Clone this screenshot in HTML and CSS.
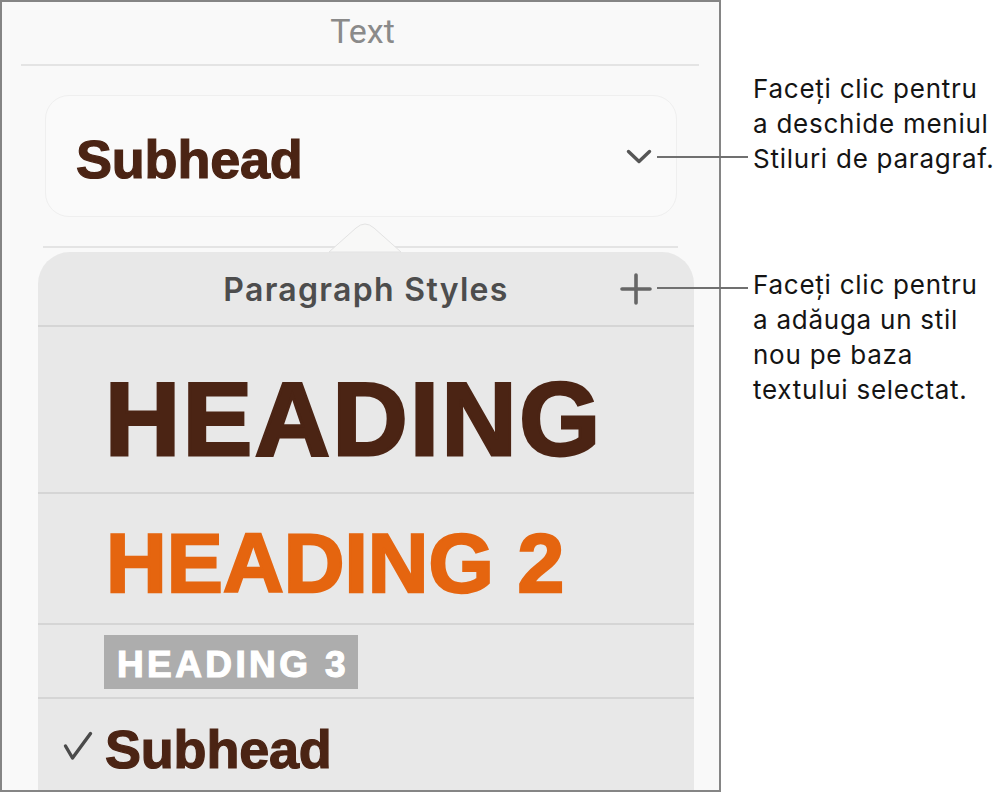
FILE: index.html
```html
<!DOCTYPE html>
<html lang="ro">
<head>
    <meta charset="UTF-8">
    <meta name="viewport" content="width=device-width, initial-scale=1.0">
    <title>Text – Paragraph Styles</title>
    <link rel="stylesheet" href="styles.css">
</head>
<body>
    <div class="page">
        <div class="panel">
            <div class="panel-title">Text</div>
            <div class="rule"></div>

            <div class="style-card">
                <span class="style-name">Subhead</span>
                <svg class="chevron" width="26" height="16" viewBox="0 0 26 16">
                    <path d="M2.5 2.5 L13 12.5 L23.5 2.5" fill="none" stroke="#555" stroke-width="3.4" stroke-linecap="round" stroke-linejoin="round"/>
                </svg>
            </div>

            <div class="rule rule-inner"></div>

            <div class="popover">
                <!-- arrow over the rule -->
                <svg class="popover-arrow" width="80" height="32" viewBox="0 0 80 32">
                    <path d="M4 31 L31 7 Q40 -1 49 7 L76 31 Z" fill="#f8f8f7" stroke="#e3e3e3" stroke-width="1"/>
                </svg>
                <div class="popover-head">
                    <span></span>
                    <span class="popover-title">Paragraph Styles</span>
                    <svg class="plus" width="32" height="32" viewBox="0 0 32 32">
                        <path d="M16 2 V30 M2 16 H30" stroke="#666" stroke-width="3.6" stroke-linecap="round"/>
                    </svg>
                </div>
                <div class="style-row row-h1">
                    <span class="heading-1">HEADING</span>
                </div>
                <div class="style-row row-h2">
                    <span class="heading-2">HEADING 2</span>
                </div>
                <div class="style-row row-h3">
                    <span class="heading-3">HEADING 3</span>
                </div>
                <div class="style-row row-sub">
                    <svg class="check" width="30" height="30" viewBox="0 0 30 30">
                        <path d="M2.5 15 L9.5 27 L27.5 2.5" fill="none" stroke="#4a4a4a" stroke-width="3.4" stroke-linecap="round" stroke-linejoin="round"/>
                    </svg>
                    <span class="style-name">Subhead</span>
                </div>
            </div>
        </div>

        <div class="notes">
            <p class="note note-menu">Faceți clic pentru<br>a deschide meniul<br>Stiluri de paragraf.</p>
            <p class="note note-add">Faceți clic pentru<br>a adăuga un stil<br>nou pe baza<br>textului selectat.</p>
        </div>

        <!-- callout lines -->
        <div class="callout callout-menu"></div>
        <div class="callout callout-add"></div>
    </div>
</body>
</html>
```

FILE: styles.css
```css
body {
    margin: 0;
    background-color: #ffffff;
    font-family: Roboto, "Liberation Sans", sans-serif;
}

.page {
    position: relative;
    display: flex;
    align-items: flex-start;
    width: 1007px;
    height: 793px;
    overflow: hidden;
}

/* panneau gauche */
.panel {
    display: flex;
    flex-direction: column;
    width: 721px;
    height: 792px;
    box-sizing: border-box;
    border: 2px solid #858585;
    background-color: #f9f9f9;
    overflow: hidden;
    flex-shrink: 0;
}

.panel-title {
    height: 62px;
    box-sizing: border-box;
    padding-top: 12px;
    text-align: center;
    font-size: 34px;
    line-height: 34px;
    color: #8a8a8a;
    padding-left: 4px;
}

.rule {
    height: 2px;
    margin: 0 20px 0 19px;
    background-color: #e4e4e4;
}

.rule-inner {
    margin: 29px 41px 0 41px;
}

.style-card {
    display: flex;
    align-items: center;
    justify-content: space-between;
    height: 122px;
    box-sizing: border-box;
    margin: 29px 42px 0 43px;
    padding: 6px 24px 0 30px;
    border: 1px solid #efefef;
    border-radius: 24px;
    background-color: #fafafa;
}

.style-name {
    font-family: "Liberation Sans", Arial, sans-serif;
    font-weight: bold;
    font-size: 54px;
    line-height: 54px;
    letter-spacing: -0.2px;
    color: #4b2414;
    -webkit-text-stroke: 1.2px #4b2414;
}

.chevron {
    margin-top: -4px;
}

/* menu Paragraph Styles */
.popover {
    position: relative;
    flex: 1;
    margin: 4px 25px 0 36px;
    border-radius: 32px 32px 0 0;
    background-color: #e8e8e8;
}

.popover-arrow {
    position: absolute;
    top: -31px;
    left: 287px;
}

.popover-head {
    display: grid;
    grid-template-columns: 1fr auto 1fr;
    align-items: center;
    height: 73px;
    padding: 0 42px;
    border-bottom: 2px solid #d5d5d5;
}

.popover-title {
    font-family: Inter, Roboto, sans-serif;
    font-weight: 600;
    font-size: 32px;
    letter-spacing: 1.3px;
    color: #4d4d4d;
    padding-top: 2px;
}

.plus {
    justify-self: end;
}

.style-row {
    display: flex;
    align-items: flex-start;
    box-sizing: border-box;
    border-bottom: 2px solid #d5d5d5;
    font-family: "Liberation Sans", Arial, sans-serif;
    font-weight: bold;
}

.row-h1 {
    height: 167px;
    padding: 40px 0 0 67px;
}

.heading-1 {
    font-size: 104px;
    line-height: 104px;
    letter-spacing: 2.6px;
    color: #4b2414;
    -webkit-text-stroke: 3px #4b2414;
}

.row-h2 {
    height: 131px;
    padding: 27px 0 0 68px;
}

.heading-2 {
    font-size: 84px;
    line-height: 84px;
    letter-spacing: 0.1px;
    color: #e5650f;
    -webkit-text-stroke: 2.4px #e5650f;
}

.row-h3 {
    height: 74px;
    padding: 10px 0 0 66px;
}

.heading-3 {
    padding: 11px 9px 6px 13px;
    background-color: #adadad;
    font-size: 37px;
    line-height: 37px;
    letter-spacing: 3.4px;
    color: #ffffff;
    -webkit-text-stroke: 1.2px #ffffff;
}

.row-sub {
    align-items: center;
    border-bottom: none;
    padding: 23px 0 0 25px;
    gap: 12px;
}

.check {
    margin-top: -6px;
}

/* textes d'aide */
.notes {
    padding-left: 32px;
}

.note {
    margin: 0;
    font-family: Inter, Roboto, sans-serif;
    font-size: 26px;
    line-height: 35px;
    letter-spacing: 0.75px;
    color: #141414;
}

.note-menu {
    margin-top: 71px;
}

.note-add {
    margin-top: 91px;
}

.callout {
    position: absolute;
    left: 657px;
    width: 91px;
    height: 2px;
    background-color: #707070;
}

.callout-menu {
    top: 156px;
}

.callout-add {
    top: 287px;
}
```
